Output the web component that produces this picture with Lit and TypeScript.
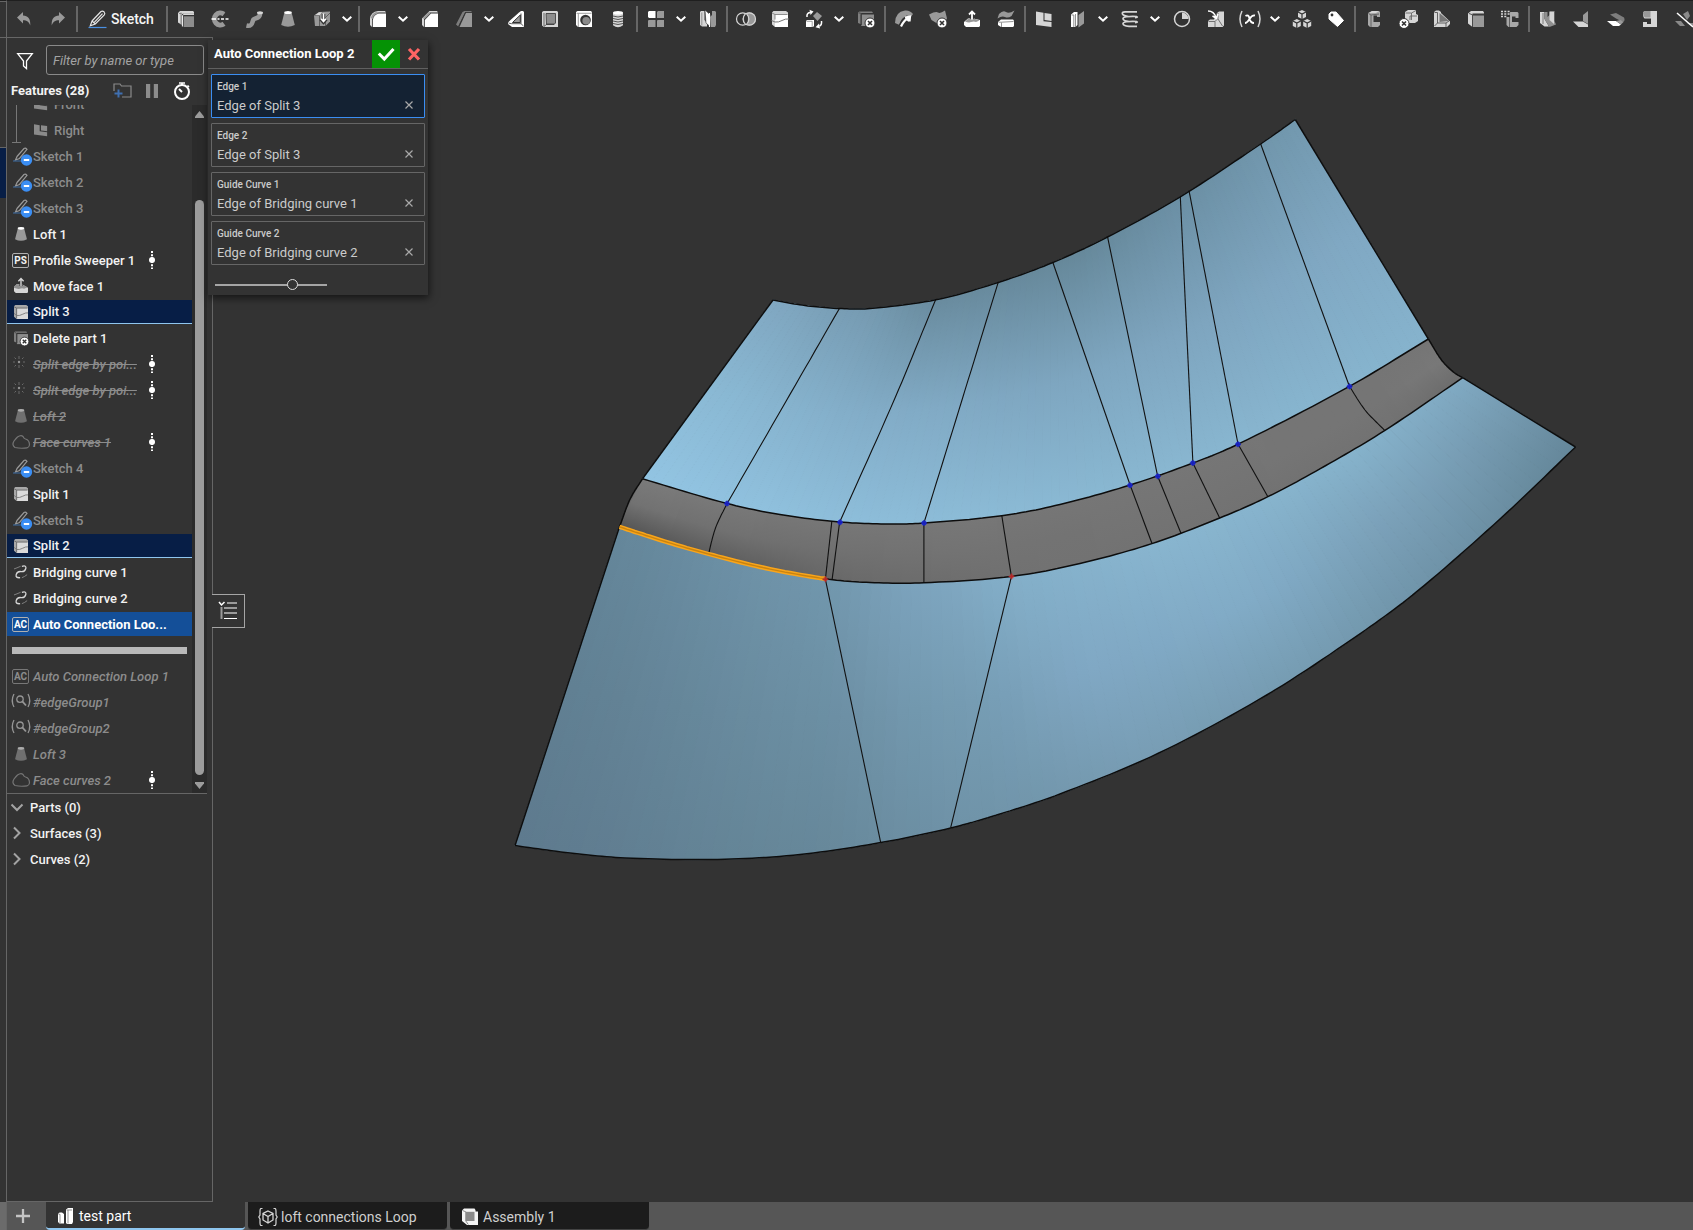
import { LitElement, html, svg, css, nothing, type SVGTemplateResult } from "lit";
import { customElement, state } from "lit/decorators.js";
import { classMap } from "lit/directives/class-map.js";

/* ---------- Icon artwork, drawn on a 16 x 16 grid ---------- */

const W = "#ffffff";
const L = "#d6d6d6";
const G = "#999999";
const D = "#333333";

const crossBadge = (cx: number, cy: number) => svg`
  <circle cx=${cx} cy=${cy} r="5" fill=${W} stroke=${D}/>
  <path d="M${cx - 2} ${cy - 2}l4 4m0-4l-4 4" stroke=${D} stroke-width="1.6"/>`;

const miniCube = (x: number, y: number) => svg`
  <g transform="translate(${x} ${y})">
    <path d="M4 0l4 2v5L4 9 0 7V2z" fill=${L}/>
    <path d="M0 2l4 2 4-2M4 4v5" fill="none" stroke=${D} stroke-width="1.2"/>
  </g>`;

const icons: Record<string, SVGTemplateResult> = {
  undo: svg`<path d="M1 6.5L7 1v3.6c5 .2 7.6 3 7.3 9.9C13 10.8 11 9.300 7 9.200V12.500z" fill=${G}/>`,
  redo: svg`<path d="M15 6.500L9 1v3.600c-5 .2-7.600 3-7.300 9.900C3 10.800 5 9.300 9 9.200V12.500z" fill=${G}/>`,
  pencil: svg`
    <path d="M3 10L12 .5Q13.500-.5 15 .8 16.500 2.300 15.300 3.800L6.300 13 1.300 14.800z M3 10l3.300 3M5 11.600l8.500-9" fill="none" stroke="#e6e6e6" stroke-width="1.200"/>
    <path d="M-.5 16.500h18" stroke="#4a90e2" stroke-width="1.200"/>`,
  extrude: svg`
    <path d="M2 0h13l1 1v1.700H4.700L3.600 4v9.800L0 11.500V2z" fill=${L}/>
    <path d="M1 2.500h2.500M3 1.500v12" stroke="#777" stroke-width=".8" fill="none"/>
    <path d="M4.400 15.500V4.800L5.800 3.300H16" stroke=${W} stroke-width="1" fill="none"/>
    <path d="M5.600 5.300H16V16H5.600z" fill="#8d8d8d"/>`,
  revolve: svg`
    <path d="M12 3.200A6 6 0 1 0 12 12.800" fill="none" stroke=${G} stroke-width="5"/>
    <path d="M13.300 1.300l1 2.200-3.500 3" stroke=${D} stroke-width=".9" fill="none"/>
    <path d="M-.5 8h4.500m1.500 0h2m1.500 0h3m1.500 0h3" stroke=${W} stroke-width="1.300"/>`,
  sweep: svg`
    <path d="M.5 14.500C7 16 6 10.500 7.500 8.500S14 8 14 3" fill="none" stroke=${G} stroke-width="4.600"/>
    <ellipse cx="14" cy="1.800" rx="3" ry="1.500" fill=${L}/>`,
  loft: svg`
    <path d="M4.300 2L1.200 14Q8 17.500 14.800 14L11.700 2z" fill=${G}/>
    <ellipse cx="8" cy="1.500" rx="3.800" ry="1.500" fill=${W}/>`,
  thicken: svg`
    <path d="M0 4.500L5 1l11-.5v10L11.500 15H1z" fill=${G}/>
    <path d="M.5 4.500h5V15M5.500 4.500L8 1.500M11.500 15V6.500L16 2" stroke="#5d5d5d" fill="none"/>
    <path d="M5 1.200h3l-2 3H1z" fill=${L}/>
    <path d="M9.500 3v7.500M6.800 8l2.700 3 2.700-3" stroke=${D} stroke-width="3.600" fill="none"/>
    <path d="M9.500 2.500v7.500M7 7.800l2.500 2.700L12 7.800" stroke=${W} stroke-width="1.600" fill="none"/>`,
  fillet: svg`
    <path d="M0 14V7.500Q1 .8 8 0h7l1 1.500H8.500Q2.700 2.500 2 8.500V16z" fill=${L}/>
    <path d="M.8 7Q2.500 1.500 7 .8L8.800 2.200Q3.500 3.500 2.600 8z" fill=${G}/>
    <path d="M2.800 16V9Q4 3.200 9 2.600h7V16z" fill=${W}/>`,
  chamfer: svg`
    <path d="M0 14V7.500L7.500 0H15l1 1.500H8L2 7.800V16z" fill=${L}/>
    <path d="M.6 7L7 .8l1.600 1.300L2.500 8.300z" fill=${G}/>
    <path d="M2.800 16V9L9 2.600h7V16z" fill=${W}/>`,
  draft: svg`
    <path d="M0 13.500L6.500 1 8.500 0H15l1 1H9.300L2.300 15.500z" fill="#7d7d7d"/>
    <path d="M3.500 16L10 1.800h6V16z" fill=${G}/>
    <path d="M2.500 15.500L9.400 1.400H16" stroke=${D} stroke-width=".7" fill="none"/>`,
  rib: svg`
    <path d="M0 11.500L2.500 9 11 1.500 13 0h2l1 1v15H4L0 13z" fill=${W}/>
    <path d="M4.500 11.500L12.300 4v7.500z" fill=${G} stroke=${D}/>
    <path d="M.5 12l3 .7h9.500L15.500 15M13 12.500V2.500" stroke=${D} fill="none" stroke-width=".8"/>`,
  shell: svg`
    <path d="M0 1l1.500-1H15l1 1v15H2l-2-1.500z" fill=${L}/>
    <path d="M4 2.500h9.500V12L12 13.500H4.500z" fill="#8d8d8d" stroke=${D} stroke-width=".8"/>
    <path d="M2 2v13M2 15.500l3-2.500h7.500" stroke=${D} fill="none" stroke-width=".7"/>`,
  hole: svg`
    <path d="M0 1l1.500-1H15l1 1.200V16H2l-2-2z" fill=${W}/>
    <path d="M.5 2.300h15M2.300 2.500V16" stroke="#777" stroke-width=".7"/>
    <circle cx="9.500" cy="9" r="5.300" fill=${D}/><circle cx="10.200" cy="9.800" r="3.800" fill="#8a8a8a"/>`,
  thread: svg`
    <path d="M3 1.800h10v12.500Q8 18 3 14.300z" fill=${L}/>
    <ellipse cx="8" cy="1.800" rx="5" ry="1.800" fill=${W}/>
    <path d="M3 5q5 2 10 0M3 7.500q5 2 10 0M3 10q5 2 10 0M3 12.500q5 2 10 0" stroke="#555" fill="none"/>`,
  pattern: svg`
    <path d="M0 1L1 0h6.500v7H1L0 6z" fill=${W}/>
    <path d="M9 1l1-1h6v7h-7zM0 9.500L1 9h6.500v7H0zM9 9.500l1-.5h6v7H9z" fill=${G}/>`,
  mirror: svg`
    <path d="M0 1l1-1h3.500v9l2.500 3v3.500H2L0 14z" fill=${L}/><path d="M1.800 1.500v13" stroke="#777" stroke-width=".7"/>
    <path d="M5-1l5.500 5v12L6 12z" fill=${W} stroke=${D} stroke-width=".6"/>
    <path d="M10 6l2-2V0h3l1 1v13l-1 2h-4z" fill=${G}/><path d="M9.500 2v14" stroke=${W}/>`,
  boolean: svg`
    <circle cx="11.300" cy="8" r="6.700" fill=${G}/>
    <circle cx="4.700" cy="8" r="6.200" fill="none" stroke=${L} stroke-width="1.200"/>
    <circle cx="11.300" cy="8" r="6.200" fill="none" stroke=${L} stroke-width="1.200"/>
    <path d="M8 3q4 5 0 10-4-5 0-10z" fill=${D}/>`,
  split: svg`
    <path d="M0 1.500L1.500 0H14l2 1.500V14l-1 2H3L0 13.500z" fill=${L}/>
    <path d="M3 3.500h13V16H3z" fill=${W}/>
    <path d="M0 2l3 1.500h12.500M3 3.500v5" stroke="#777" stroke-width=".8" fill="none"/>
    <path d="M-.5 9.500L3 11q3.500.5 7-1.500t7-1.500" stroke="#777" stroke-width="1" fill="none"/>`,
  splitMuted: svg`
    <path d="M0 1.500L1.500 0H14l2 1.500V14l-1 2H3L0 13.500z" fill="#a8a8a8"/>
    <path d="M3 3.500h13V16H3z" fill="#dadada"/>
    <path d="M0 2l3 1.500h12.500M3 3.500v12" stroke="#666" stroke-width="1" fill="none"/>
    <path d="M0 9.500L3 12q3.500.5 7-1.500t6-1.500" stroke="#777" stroke-width="1" fill="none"/>`,
  transform: svg`
    <path d="M0 10l1-1h7v6l-1 1H0z" fill=${W}/><path d="M.5 10.300h5.700V16" stroke="#777" stroke-width=".7" fill="none"/>
    <path d="M11 1l5 4-4.500 5L7 5z" fill=${G}/>
    <path d="M1 6q-.5-4 3-4.500" stroke=${W} stroke-width="1.500" fill="none"/><path d="M3.500-1.200L7.500.500 4.500 4z" fill=${W}/>
    <path d="M15.500 10q.5 4-2 5" stroke=${W} stroke-width="1.500" fill="none"/><path d="M14 17.500l-4.500-1.300L13 12.500z" fill=${W}/>`,
  deletePart: svg`
    <path d="M0 1.500L1.500.500H14l1 1.500H3.500L2.500 3.500V13L0 12z" fill="#7f7f7f"/><path d="M3.300 3.500H16V15H3.300z" fill="#8d8d8d"/>
    <path d="M.5 2h2l1 1.500V14" stroke=${D} stroke-width=".7" fill="none"/>${crossBadge(12, 12)}`,
  modifyFillet: svg`
    <path d="M-1 12Q-1 1 9-.5q5-.5 8 3.500l-3 4Q6 3 3.500 14z" fill=${G}/>
    <path d="M4.500 15Q8 8 12 6" stroke=${D} stroke-width="4" fill="none"/>
    <path d="M5 15.500Q8 9 13 6.500M9 6.500l5-1-.5 5M13 10l-2-2" stroke=${W} stroke-width="2.200" fill="none"/>`,
  deleteFace: svg`
    <path d="M-1 3.500Q6 0 8 1.500T15-.5l2 8-3 4.500-6 1L1.500 9z" fill=${G}/>${crossBadge(12, 12)}`,
  moveFace: svg`
    <path d="M0 11l4-3.500h5l7 1.500v6l-1 1H2l-2-2z" fill=${W}/>
    <path d="M1 10.500l3.500-3h5.500l5.500 2-3.500 1.500q-2-1-5 0-2 1-6-.5z" fill=${G}/>
    <path d="M8 8V2" stroke=${D} stroke-width="3.500"/><path d="M8 8.500V1.500M5 3.500L8 .5l3 3" stroke=${W} stroke-width="1.800" fill="none"/>`,
  moveFaceMuted: svg`
    <path d="M0 9l3-3h6l7 4v5l-1 1H2l-2-2z" fill=${L}/>
    <path d="M0 8.500L3 6h6l6.500 3.500-4 1.500q-2-1-5 0-2 1-6.500-1z" fill="#8f8f8f"/>
    <path d="M8 8V1" stroke=${D} stroke-width="3.500"/><path d="M8 8V0M5 2.500L8-.5l3 3" stroke=${L} stroke-width="1.600" fill="none"/>`,
  replaceFace: svg`
    <path d="M1 3Q5-1 8 1t8.500-1.500L13.500 5Q10 7.500 7 6T-.5 7.500z" fill=${G}/>
    <path d="M0 11l3-2.500h12l1 1V15l-1 1H3L0 14z" fill=${W}/><path d="M.5 11.200h3l12-.7M3.500 11.500V16" stroke="#777" stroke-width=".8" fill="none"/>`,
  plane: svg`
    <path d="M0 .5l7.500 1.200v8.500L15.500 11V16L0 14zM8.500 2l7 1v7L8.500 9z" fill=${L}/>`,
  frame: svg`
    <path d="M1 3.500L4 1h3.500v13l-2 2H1z" fill=${W}/><path d="M1.500 4h2.300v12M5.500 3v13" stroke="#777" stroke-width=".8" fill="none"/>
    <path d="M8.500 4L14 0v12.500l-5.500 4z" fill=${G}/>`,
  helix: svg`
    <path d="M15 .8H3Q-.5 1 .5 3t6 2.500H15M15 5.500Q1 5 1 7.500t6 3H15M15 5.500q1 1-2 1.200M15 10.500Q1 10 1 12.500t6 2.800h8M15 10.500q1 1-2 1.200" fill="none" stroke=${L} stroke-width="1.700"/>`,
  clock: svg`
    <circle cx="8" cy="8" r="7.500" fill="none" stroke=${L} stroke-width="1.500"/><path d="M8 8V1.500A6.500 6.500 0 0 1 14.500 8z" fill=${L}/>`,
  derive: svg`
    <path d="M0 10l2-1.500h4L9 2l2-1.500h5v14L14.500 16H0z" fill=${L}/>
    <path d="M.5 10.500h6.500V16M7 10.500l3-3V2M10 8l4.500 7" stroke="#666" stroke-width=".9" fill="none"/>
    <path d="M0 0q6 0 8 6" stroke=${D} stroke-width="3.500" fill="none"/><path d="M0 0q6 0 8 6.500M4.500 5l3.800 2.300L10 3" stroke=${W} stroke-width="1.600" fill="none"/>`,
  variable: svg`
    <path d="M0 0Q-4 8 0 16M16 0q4 8 0 16" stroke=${L} stroke-width="1.500" fill="none"/>
    <path d="M3.500 5Q6.500 3 7.500 7.500T12 12M13 4.500Q10 4 7.500 8T3 12" stroke=${W} stroke-width="1.800" fill="none"/>`,
  cubes: svg`${miniCube(4, -1)}${miniCube(-1.2, 8)}${miniCube(9.2, 8)}`,
  tag: svg`
    <path d="M1 3l2-2h5l7.500 8.500-6 6L1 8z" fill=${W} stroke=${W} stroke-width="1" stroke-linejoin="round"/><circle cx="4" cy="4" r="1.400" fill=${D}/>`,
  channel: svg`
    <path d="M2 2l4-2h7l1 1v5h-3V4.500H7.500V11H14v3l-2 2H4l-2-2z" fill="#a8a8a8"/>
    <path d="M2.500 2.500L5 4v12M5 4l8-1" stroke="#5a5a5a" stroke-width=".9" fill="none"/><path d="M6 0h7l-3 2H3z" fill=${L}/>`,
  deleteBody: svg`
    <path d="M5 1l3-2h8v4l2 1v6l-3 2H8L5 9z" fill=${L}/><path d="M5.500 2h6v7M11.500 2L16-.5M10 9V5h7" stroke="#666" stroke-width=".9" fill="none"/>${crossBadge(4, 12.5)}`,
  gusset: svg`
    <path d="M0 1l2-1.500h3L7 1v1l9 8.500V13l-3 3H0z" fill=${L}/>
    <path d="M5.500 2v9L15 10z" fill="#777"/><path d="M.5 1.500h3V12l-3 3M3.500 12H12v4M12 12l3-2" stroke="#444" stroke-width=".8" fill="none"/>`,
  solid: svg`
    <path d="M0 2.500L3 0h12l1 1.500v1H4.500V16L0 12.500z" fill=${L}/><path d="M1 2.500l3.500 1.300H16M4.500 4v12" stroke="#444" stroke-width=".9" fill="none"/>
    <path d="M5 4.500h11V16H5z" fill=${G}/>`,
  gridChannel: svg`
    <g transform="translate(2.5 0)"><path d="M2 3l4-2h7l1 1v5h-3V5.500H7.500V11H14v3l-2 2H4l-2-2z" fill="#a8a8a8"/><path d="M5 5v11" stroke="#5a5a5a" stroke-width=".9"/></g>
    <path d="M-1 0h9v6h-9z" fill=${D}/><path d="M-1 .5h2M2.300.500h2M5.600.500h2M-1 3h2M2.300 3h2M5.600 3h2M-1 5.500h2M2.300 5.500h2" stroke=${L} stroke-width="1.400"/>`,
  flange: svg`
    <path d="M0 1h4.500v7L9 15.500H4.500L0 12z" fill=${L}/><path d="M5 1h2.500v5l2-2V0h5v10L16 13.500 9.500 16 5 9z" fill="#8f8f8f"/>
    <path d="M9.500 1h4.500v12L9.500 9z" fill=${L}/><path d="M3 2v11" stroke="#666" stroke-width=".8"/>`,
  bend: svg`<path d="M9 4L14 0v13l-5-3z" fill=${G}/><path d="M-1 10.500H9l5 3V16H4.500z" fill=${L}/>`,
  hem: svg`<path d="M2 3.500l6-1.500 8 4.500q1.500 3-1 4.500L8 7.500z" fill="#7d7d7d"/><path d="M-1 10h9l5 3.500-2 1.500H5z" fill=${W}/><path d="M8 10l5 3.500 2.500-2.500-3-2z" fill=${G}/>`,
  tab: svg`<path d="M8.500 0H15v16H1V11h4v2h4V7.500H2.500Q1 5.500 1 3.500V2q.5-2 2.500-2z" fill=${L}/><path d="M1 2q.5-2 2.500-2h5v6.500H3q-2-2-2-4z" fill=${G}/>`,
  unbend: svg`<path d="M-1 10h6l4 5H4zM7 3l5-3 2 5-3 4zM11 12h6v4z" fill="#8a8a8a"/><path d="M1 2l16 14" stroke=${W} stroke-width="1.500"/>`,
  /* tree-only artwork */
  tinyPlane: svg`<path d="M0 1.500l6.500 1v7l8.500 1V15L0 13zM8 2.500l7 1v6L8 8.500z" fill="#8a8a8a"/>`,
  hiddenSketch: svg`
    <path d="M4 8.500L11 .5q1.500-.8 3 .8L6.500 10.500 2.500 12z" fill="none" stroke="#9a9a9a" stroke-width="1.200"/><path d="M0 13h9" stroke="#3d6ea8"/>
    <circle cx="13.500" cy="12" r="5.700" fill="#3b8ef3"/><path d="M10.800 12h5.400" stroke=${W} stroke-width="2"/>`,
  points: svg`<circle cx="6" cy="6" r="1.200" fill=${L}/><path d="M6 0v3M6 9v3M0 6h2M10 6h2M1.500 1.500L3 3M10.500 1.500L9 3M1.500 10.500L3 9M10.500 10.500L9 9" stroke="#8f8f8f"/>`,
  faceCurves: svg`<path d="M2 13.500Q-1.500 11 1 7q2-2.500 3.500-4Q8 .5 10 2.500q.8 2 2.500 2.500 4 1 4 6-.5 2.500-2.500 2.800-6 1-12-.3z" fill="none" stroke="#a0a0a0" stroke-width="1.200"/>`,
  bridging: svg`<path d="M0 4.500Q3 3.500 7.500 1.500M9 14.500q3-1 6-3.500" stroke="#8a8a8a" stroke-width="1" fill="none"/><path d="M9 1.500Q14.500 0 13.500 4T8 7.500 2.500 11 7 14.500" stroke=${L} stroke-width="1.500" fill="none"/>`,
  query: svg`<path d="M1 0q-3.500 6.500 0 13M15 0q3.500 6.500 0 13" fill="none" stroke=${L} stroke-width="1.300"/><circle cx="7" cy="5.200" r="3.200" fill="none" stroke=${L} stroke-width="1.300"/><path d="M9.500 7.700L13 11.500" stroke=${L} stroke-width="1.800"/>`,
  filter: svg`<path d="M.7.7h14.600L9.500 8v7.500L6.500 13V8z" fill="none" stroke=${W} stroke-width="1.300"/>`,
  folder: svg`<path d="M0 8V1h6l1.500 2H17v11H8" fill="none" stroke="#8a8a8a" stroke-width="1.200"/><path d="M.5 10.500h8M4.500 6.500v8" stroke="#3f6fb0" stroke-width="2"/>`,
  pause: svg`<path d="M2 1h4.200v14H2zM9.800 1H14v14H9.800z" fill="#8c8c8c"/>`,
  stopwatch: svg`<circle cx="8" cy="9" r="7" fill="none" stroke=${W} stroke-width="2"/><path d="M8 9L5 6" stroke=${W} stroke-width="2"/><path d="M5 0h6M8 0v2M13.500 2.500l1.500 1.500" stroke=${W} stroke-width="1.600"/>`,
  check: svg`<path d="M.8 7.500l5.500 5.500L15.500 3" fill="none" stroke=${W} stroke-width="3"/>`,
  cancel: svg`<path d="M3 3l10 10.500M13 3L3 13.500" stroke="#ff6464" stroke-width="3.200"/>`,
  clear: svg`<path d="M4.500 4.500l7 7m0-7l-7 7" stroke="#a9a9a9" stroke-width="1.200"/>`,
  plus: svg`<path d="M8 0v16M0 8h16" stroke="#c4c4c4" stroke-width="2.600"/>`,
  partStudio: svg`
    <path d="M0 6l1.500-1.500H4L6 6v9.500H1.500L0 14zM8 1.500L10 0h5v14l-1 2H9l-1-1z" fill=${W}/><path d="M.5 6.300h1.500V15M8.500 2h1.500v13.500M10 2h4" stroke="#777" stroke-width=".8" fill="none"/>`,
  featureStudio: svg`
    <path d="M2.500-.5H.8Q0 0 0 2v4l-1.200 2L0 10v4q0 2 .8 2.500h1.700M13.500-.5h1.700Q16 0 16 2v4l1.200 2L16 10v4q0 2-.8 2.500h-1.700" fill="none" stroke=${L} stroke-width="1.200"/>
    <path d="M8 2l5 2.500v6.500L8 14l-5-3V4.500zM3 4.500L8 7.500l5-3M8 7.500V14" fill="none" stroke=${L} stroke-width="1.300"/>`,
  assembly: svg`<path d="M0 1.500L2-.5h10.500l1 1.500v1.500H16V16H5L0 12z" fill="#f4f4f4"/><path d="M3.800 2.800h8.700V12H3.800z" fill="#8a8a8a"/><path d="M.5 1.500l3.300 1.300V12l2.500 3.500" stroke="#8a8a8a" fill="none"/>`,
  panel: svg`
    <path d="M0 0l2.500 3L5.500 0" stroke=${W} stroke-width="1.500" fill="none"/><path d="M2.500 5v12" stroke="#999" stroke-width="2"/>
    <path d="M8 1h10M5 6h13M5 11h13M5 16.500h13" stroke=${W} stroke-width="1.200"/>`,
};

const icon = (name: string, cls = "i16") =>
  html`<svg class=${cls} viewBox="0 0 16 16" aria-hidden="true">${icons[name]}</svg>`;

/* ---------- Surface geometry ---------- */

type Pt = [number, number];
type Rgb = [number, number, number];

function spline(points: Pt[], steps = 12): Pt[] {
  const out: Pt[] = [];
  for (let i = 0; i < points.length - 1; i++) {
    const p0 = points[Math.max(0, i - 1)];
    const p1 = points[i];
    const p2 = points[i + 1];
    const p3 = points[Math.min(points.length - 1, i + 2)];
    /* Tangents scaled by segment length keep unevenly spaced knots smooth. */
    const d = Math.hypot(p2[0] - p1[0], p2[1] - p1[1]);
    const dPrev = Math.hypot(p2[0] - p0[0], p2[1] - p0[1]) || 1;
    const dNext = Math.hypot(p3[0] - p1[0], p3[1] - p1[1]) || 1;
    for (let s = 0; s < steps; s++) {
      const t = s / steps;
      const h = [2 * t ** 3 - 3 * t ** 2 + 1, t ** 3 - 2 * t ** 2 + t, -2 * t ** 3 + 3 * t ** 2, t ** 3 - t ** 2];
      const at = (k: 0 | 1) =>
        h[0] * p1[k] + (h[1] * d * (p2[k] - p0[k])) / dPrev + h[2] * p2[k] + (h[3] * d * (p3[k] - p1[k])) / dNext;
      out.push([at(0), at(1)]);
    }
  }
  out.push(points[points.length - 1]);
  return out;
}

function resample(line: Pt[], count: number): Pt[] {
  const len = [0];
  for (let i = 1; i < line.length; i++) {
    len.push(len[i - 1] + Math.hypot(line[i][0] - line[i - 1][0], line[i][1] - line[i - 1][1]));
  }
  const out: Pt[] = [];
  let j = 0;
  for (let i = 0; i <= count; i++) {
    const target = (len[len.length - 1] * i) / count;
    while (j < line.length - 2 && len[j + 1] < target) j++;
    const t = (target - len[j]) / (len[j + 1] - len[j] || 1);
    out.push([line[j][0] + t * (line[j + 1][0] - line[j][0]), line[j][1] + t * (line[j + 1][1] - line[j][1])]);
  }
  return out;
}

const f = (n: number) => n.toFixed(1);
const toPath = (pts: Pt[]) => "M" + pts.map((p) => `${f(p[0])} ${f(p[1])}`).join("L");
const rgb = (hex: string): Rgb => [1, 3, 5].map((k) => parseInt(hex.slice(k, k + 2), 16)) as Rgb;

function ramp(stops: [number, string][], u: number): string {
  let i = 0;
  while (i < stops.length - 2 && stops[i + 1][0] < u) i++;
  const [a, ca] = stops[i];
  const [b, cb] = stops[i + 1];
  const t = Math.min(1, Math.max(0, (u - a) / (b - a)));
  const s = t * t * (3 - 2 * t) * 0.5 + t * 0.5;
  const x = rgb(ca);
  const y = rgb(cb);
  return `rgb(${x.map((v, k) => Math.round(v + (y[k] - v) * s)).join(",")})`;
}

const upperTop = spline([[773, 300], [805, 305.5], [839.3, 308.5], [870, 308.5], [935.7, 299.8], [998.2, 282.5], [1052.8, 262.5], [1107.5, 237], [1180.3, 196.8], [1260.6, 144], [1295.3, 119.5]]);
const upperBottom = spline([[642.5, 478.8], [727.1, 503.5], [780, 514.5], [839.6, 522], [889.3, 524], [923.9, 523], [1001.8, 515.7], [1060, 504.5], [1130.1, 485], [1192.9, 463], [1238, 444.2], [1349.4, 386.4], [1428.4, 339]]);
const bandBottom = spline([[619.5, 526.8], [665, 541.5], [708.6, 554], [765, 568], [825.4, 578.8], [870, 582.5], [923.9, 582.8], [1011.6, 576.4], [1080, 563.5], [1151.9, 543.6], [1219.7, 518], [1267.9, 496.7], [1325, 466], [1384.6, 430.6], [1462.7, 377.7]]);
const lowerBottom = spline([[515, 845.6], [570, 853], [625, 857.9], [717.9, 859.4], [800, 854.5], [880.7, 842.6], [950.7, 828], [1000, 814], [1060, 794], [1158.3, 753.3], [1266.7, 695], [1360.7, 633.3], [1416.7, 591.7], [1500, 519], [1575.6, 447]]);
const leftWall = spline([[642.5, 478.8], [630.4, 498.5], [619.5, 526.8]]);
const rightWall = spline([[1428.4, 339], [1441.5, 360], [1454, 372.5], [1462.7, 377.7]]);
const bandOutline = [...upperBottom, ...rightWall, ...[...bandBottom].reverse(), ...[...leftWall].reverse()];

interface Patch {
  id: string;
  a: Pt[];
  b: Pt[];
  shades: [number, [number, string][]][];
}

const patches: Patch[] = [
  {
    id: "lower", a: bandBottom, b: lowerBottom,
    shades: [
      [0, [[0, "#65879b"], [0.22, "#7095ab"], [0.35, "#7da4be"], [0.46, "#84b0ca"], [0.62, "#88b5cf"], [0.84, "#86b3cc"], [1, "#80a9c2"]]],
      [0.5, [[0, "#618093"], [0.24, "#6b8ea2"], [0.38, "#759bb2"], [0.52, "#80a8c4"], [0.68, "#81abc6"], [0.84, "#7ba1b9"], [1, "#7398ae"]]],
      [1, [[0, "#5e7a8e"], [0.24, "#668799"], [0.4, "#7094a9"], [0.55, "#789db4"], [0.7, "#769cb2"], [0.85, "#6f93a8"], [1, "#65879a"]]],
    ],
  },
  {
    id: "upper", a: upperTop, b: upperBottom,
    shades: [
      [0, [[0, "#80a7c1"], [0.15, "#779cb3"], [0.3, "#698b9e"], [0.55, "#66889a"], [0.75, "#6b8fa4"], [1, "#7298ae"]]],
      [0.5, [[0, "#8ab9d4"], [0.25, "#82acc7"], [0.5, "#7ea6c0"], [0.75, "#7ea5bf"], [1, "#80a8c3"]]],
      [1, [[0, "#92c4e2"], [0.3, "#8dbdd9"], [0.6, "#89b7d1"], [1, "#86b3cd"]]],
    ],
  },
  {
    id: "band", a: upperBottom, b: bandBottom,
    shades: [
      [0, [[0, "#7a7a7a"], [0.2, "#777777"], [1, "#757575"]]],
      [0.5, [[0, "#727272"], [0.2, "#707070"], [0.4, "#737373"], [0.9, "#757575"], [1, "#787878"]]],
      [1, [[0, "#545454"], [0.12, "#5e5e5e"], [0.3, "#6b6b6b"], [0.5, "#727272"], [0.9, "#727272"], [1, "#6c6c6c"]]],
    ],
  },
];

function drawPatch({ id, a, b, shades }: Patch) {
  const n = 90;
  const pa = resample(a, n);
  const pb = resample(b, n);
  return Array.from({ length: n }, (_, i) => {
    const u = (i + 0.5) / n;
    const g = `${id}${i}`;
    const mid = (p: Pt[], k: 0 | 1) => f((p[i][k] + p[i + 1][k]) / 2);
    return svg`
      <linearGradient id=${g} gradientUnits="userSpaceOnUse" x1=${mid(pa, 0)} y1=${mid(pa, 1)} x2=${mid(pb, 0)} y2=${mid(pb, 1)}>
        ${shades.map(([v, stops]) => svg`<stop offset=${v} stop-color=${ramp(stops, u)}/>`)}
      </linearGradient>
      <path d="${toPath([pa[i], pa[i + 1], pb[i + 1], pb[i]])}z" fill="url(#${g})" stroke="url(#${g})"/>`;
  });
}

const facetLines: Pt[][] = [
  [[839.3, 308.7], [781, 410], [727.1, 503.5]],
  [[935.7, 299.5], [895, 398], [839.6, 522.2]],
  [[998.2, 282.3], [962, 400], [923.9, 523]],
  [[1052.8, 262.3], [1130.1, 485]],
  [[1107.5, 236.7], [1157.7, 476.3]],
  [[1180.3, 196.7], [1192.9, 463]],
  [[1189, 190.7], [1238, 444]],
  [[1260.6, 143.7], [1349.4, 386.3]],
  [[825.4, 579.3], [880.7, 842.6]],
  [[1011.4, 576.6], [950.7, 827.6]],
  [[727.1, 503.5], [715.5, 528], [708.6, 553.6]],
  [[831.8, 521.5], [825.4, 579.3]],
  [[839.6, 522.2], [832.1, 579.6]],
  [[923.9, 523], [923.9, 582.7]],
  [[1001.8, 515.7], [1011.4, 576.6]],
  [[1130.1, 485], [1151.9, 543.3]],
  [[1157.7, 476.3], [1181, 533.3]],
  [[1192.9, 463], [1219.7, 518]],
  [[1238, 444], [1267.9, 496.7]],
  [[1349.4, 386.3], [1365, 410], [1384.6, 430.3]],
];

const outlines: Pt[][] = [
  upperTop, upperBottom, bandBottom, lowerBottom, leftWall, rightWall,
  [[773, 300], [642.5, 478.8]],
  [[1295.3, 119.5], [1428.4, 339]],
  [[619.5, 526.8], [515, 845.6]],
  [[1462.7, 377.7], [1575.6, 447]],
];

const bluePoints: Pt[] = [[727, 503.5], [840, 522.3], [924, 523], [1130, 485.2], [1157.8, 476.3], [1192.8, 463], [1238, 444.2], [1349.5, 386.4]];
const redPoints: Pt[] = [[825.4, 579.3], [1011.6, 576.4]];
const selectedEdge = bandBottom.slice(0, 49);

/* ---------- Data ---------- */

type Tool = [icon: string, label: string, menu?: boolean];

const toolGroups: Tool[][] = [
  [["extrude", "Extrude"], ["revolve", "Revolve"], ["sweep", "Sweep"], ["loft", "Loft"], ["thicken", "Thicken", true]],
  [["fillet", "Fillet", true], ["chamfer", "Chamfer"], ["draft", "Draft", true], ["rib", "Rib"], ["shell", "Shell"], ["hole", "Hole"], ["thread", "External thread"]],
  [["pattern", "Pattern", true], ["mirror", "Mirror"]],
  [["boolean", "Boolean"], ["split", "Split"], ["transform", "Transform", true], ["deletePart", "Delete part"]],
  [["modifyFillet", "Modify fillet"], ["deleteFace", "Delete face"], ["moveFace", "Move face"], ["replaceFace", "Replace face"]],
  [["plane", "Plane"], ["frame", "Surface", true], ["helix", "Helix", true], ["clock", "Mass properties"], ["derive", "Derived"], ["variable", "Variable", true], ["cubes", "Composite part"], ["tag", "Tag"]],
  [["channel", "Frame"], ["deleteBody", "Trim"], ["gusset", "Gusset"], ["solid", "End cap"], ["gridChannel", "Cut list"]],
  [["flange", "Sheet metal model"], ["bend", "Flange"], ["hem", "Hem"], ["tab", "Tab"], ["unbend", "Unfold"]],
];

interface Feature {
  name: string;
  icon?: string;
  badge?: string;
  tone?: "hidden" | "suppressed" | "rolled" | "picked" | "active";
  menu?: boolean;
  child?: "middle" | "last";
}

const features: Feature[] = [
  { name: "Front", icon: "tinyPlane", tone: "hidden", child: "middle" },
  { name: "Right", icon: "tinyPlane", tone: "hidden", child: "last" },
  { name: "Sketch 1", icon: "hiddenSketch", tone: "hidden" },
  { name: "Sketch 2", icon: "hiddenSketch", tone: "hidden" },
  { name: "Sketch 3", icon: "hiddenSketch", tone: "hidden" },
  { name: "Loft 1", icon: "loft" },
  { name: "Profile Sweeper 1", badge: "PS", menu: true },
  { name: "Move face 1", icon: "moveFaceMuted" },
  { name: "Split 3", icon: "splitMuted", tone: "picked" },
  { name: "Delete part 1", icon: "deletePart" },
  { name: "Split edge by poi...", icon: "points", tone: "suppressed", menu: true },
  { name: "Split edge by poi...", icon: "points", tone: "suppressed", menu: true },
  { name: "Loft 2", icon: "loft", tone: "suppressed" },
  { name: "Face curves 1", icon: "faceCurves", tone: "suppressed", menu: true },
  { name: "Sketch 4", icon: "hiddenSketch", tone: "hidden" },
  { name: "Split 1", icon: "splitMuted" },
  { name: "Sketch 5", icon: "hiddenSketch", tone: "hidden" },
  { name: "Split 2", icon: "splitMuted", tone: "picked" },
  { name: "Bridging curve 1", icon: "bridging" },
  { name: "Bridging curve 2", icon: "bridging" },
  { name: "Auto Connection Loo...", badge: "AC", tone: "active" },
];

const rolledBack: Feature[] = [
  { name: "Auto Connection Loop 1", badge: "AC", tone: "rolled" },
  { name: "#edgeGroup1", icon: "query", tone: "rolled" },
  { name: "#edgeGroup2", icon: "query", tone: "rolled" },
  { name: "Loft 3", icon: "loft", tone: "rolled" },
  { name: "Face curves 2", icon: "faceCurves", tone: "rolled", menu: true },
];

const fields = [
  ["Edge 1", "Edge of Split 3"],
  ["Edge 2", "Edge of Split 3"],
  ["Guide Curve 1", "Edge of Bridging curve 1"],
  ["Guide Curve 2", "Edge of Bridging curve 2"],
];

const base = css`
  *, *::before, *::after { box-sizing: border-box; }
  button, input { font: inherit; color: inherit; background: none; border: 0; padding: 0; margin: 0; }
  ul { list-style: none; margin: 0; padding: 0; }
  svg { display: block; overflow: visible; flex: none; }
  .i16 { width: 16px; height: 16px; }
  .i14 { width: 14px; height: 14px; }
`;

@customElement("tool-bar")
class ToolBar extends LitElement {
  static styles = [base, css`
    :host { display: flex; height: 37px; overflow: hidden; border-top: 1px solid #1f1f1f; }
    .tool { flex: none; width: 34px; display: flex; align-items: center; justify-content: center; }
    .menu { flex: none; width: 18px; padding-right: 2px; display: flex; align-items: center; justify-content: center; }
    .chevron { width: 10px; height: 6px; }
    .rule { flex: none; width: 2px; height: 26px; margin: 5px 1px; background: #666; }
    .sketch { flex: none; width: 86px; display: flex; align-items: center; gap: 6px; padding-left: 10px; font-size: 14px; font-weight: 500; color: #f5f5f5; }
  `];

  render() {
    const rule = html`<span class="rule"></span>`;
    return html`
      <button class="tool" aria-label="Undo">${icon("undo")}</button>
      <button class="tool" aria-label="Redo">${icon("redo")}</button>
      ${rule}
      <button class="sketch">${icon("pencil")}Sketch</button>
      ${toolGroups.map((group) => html`${rule}${group.map(([name, label, menu]) => html`
        <button class="tool" aria-label=${label}>${icon(name)}</button>
        ${menu ? html`<button class="menu" aria-label="${label} options">
          <svg class="chevron" viewBox="0 0 10 6"><path d="M.7.7L5 4.700 9.300.7" fill="none" stroke="#fff" stroke-width="2"/></svg>
        </button>` : nothing}`)}`)}
    `;
  }
}

@customElement("feature-panel")
class FeaturePanel extends LitElement {
  static styles = [base, css`
    :host { display: flex; flex-direction: column; width: 206px; flex: none; border: 1px solid #666; border-left: 0; font-size: 13px; }
    .filter { display: flex; align-items: center; gap: 13px; padding: 7px 8px 0 10px; }
    .filter svg { margin-top: 1px; }
    .filter input { flex: 1; min-width: 0; height: 30px; padding: 0 6px; border: 1px solid #8a8a8a; border-radius: 3px; font-style: italic; }
    .filter input::placeholder { color: #a3a3a3; opacity: 1; font-style: italic; }
    .head { display: flex; align-items: center; height: 30px; padding: 1px 22px 0 4px; }
    .head h2 { flex: 1; margin: 0; font-size: 13px; font-weight: 700; color: #f2f2f2; white-space: nowrap; }
    .actions { display: flex; align-items: center; gap: 14px; }
    .scroller { display: flex; width: 200px; overflow: hidden; border-bottom: 1px solid #666; }
    .list { flex: 1; min-width: 0; margin-top: -14px; display: flex; flex-direction: column; }
    .row { display: flex; align-items: center; height: 24px; margin: 1px 0; padding-left: 5px; color: #f2f2f2; font-weight: 500; }
    .row button { display: flex; align-items: center; text-align: left; white-space: nowrap; }
    .row .name { min-width: 112px; padding-left: 4px; }
    .glyph { width: 17px; display: flex; justify-content: center; }
    .badge { width: 17px; height: 15px; border: 1px solid #b0b0b0; border-radius: 2px; font-size: 10px; line-height: 13px; font-weight: 700; text-align: center; }
    .hidden { color: #8c8c8c; }
    .hidden.child .name { padding-left: 5px; }
    .suppressed, .rolled { color: #8c8c8c; font-style: italic; }
    .rolled .badge { font-style: normal; border-color: #777; }
    .suppressed .name { text-decoration: line-through; }
    .suppressed .glyph svg, .rolled .glyph svg { opacity: 0.6; }
    .picked { background: #071e46; border-bottom: 1px solid #8fc6ef; }
    .active { background: #144f98; color: #fff; font-weight: 700; }
    .guide { width: 20px; height: 26px; }
    .guide svg { width: 8px; height: 26px; }
    .row .dots { margin-left: 3px; width: 16px; justify-content: center; }
    .dots svg { width: 6px; height: 18px; }
    .rollback { height: 7px; margin: 10px 5px 9px; background: #b9b9b9; }
    .bar { flex: none; width: 15px; background: #2b2b2b; display: flex; flex-direction: column; align-items: center; padding: 6px 0 4px; }
    .arrow { width: 9px; height: 7px; }
    .thumb { flex: 1; width: 9px; margin: 82px 0 7px; border-radius: 5px; background: #9c9c9c; }
    .group { display: flex; align-items: center; gap: 7px; height: 26px; padding-left: 4px; color: #f2f2f2; font-weight: 500; }
    .group svg { width: 12px; height: 12px; }
  `];

  private row(item: Feature) {
    const cls = { row: true, child: !!item.child, [item.tone ?? "normal"]: true };
    const small = ["splitMuted", "loft", "deletePart", "moveFaceMuted", "tinyPlane", "bridging"].includes(item.icon ?? "");
    return html`<li class=${classMap(cls)}>
      ${item.child ? html`<span class="guide"><svg viewBox="0 0 8 26">
        <path d=${item.child === "last" ? "M4.500-1v26M0 25.500h9" : "M4.500-1v28"} stroke="#777" fill="none"/></svg></span>` : nothing}
      <button>
        ${item.badge ? html`<span class="badge">${item.badge}</span>` : html`<span class="glyph">${icon(item.icon!, small ? "i14" : "i16")}</span>`}
        <span class="name">${item.name}</span>
      </button>
      ${item.menu ? html`<button class="dots" aria-label="Feature script version">
        <svg viewBox="0 0 6 18"><path d="M3 0v18" stroke="#fff" stroke-width="2" stroke-dasharray="2 1.300"/><circle cx="3" cy="9" r="3" fill="#fff"/></svg>
      </button>` : nothing}
    </li>`;
  }

  render() {
    return html`
      <div class="filter">
        ${icon("filter")}
        <input type="text" aria-label="Filter features" placeholder="Filter by name or type">
      </div>
      <div class="head">
        <h2>Features (28)</h2>
        <div class="actions">
          <button aria-label="New folder">${icon("folder")}</button>
          <button aria-label="Pause regeneration">${icon("pause")}</button>
          <button aria-label="Regeneration times">${icon("stopwatch")}</button>
        </div>
      </div>
      <div class="scroller">
        <ul class="list">
          ${features.map((item) => this.row(item))}
          <li class="rollback"></li>
          ${rolledBack.map((item) => this.row(item))}
        </ul>
        <div class="bar">
          <svg class="arrow" viewBox="0 0 9 7"><path d="M4.500 0L9 5.500V7H0V5.500z" fill="#9c9c9c"/></svg>
          <div class="thumb"></div>
          <svg class="arrow" viewBox="0 0 9 7"><path d="M4.500 7L9 1.500V0H0v1.500z" fill="#9c9c9c"/></svg>
        </div>
      </div>
      ${[["Parts (0)", true], ["Surfaces (3)", false], ["Curves (2)", false]].map(([label, open]) => html`
        <button class="group" aria-expanded=${open ? "true" : "false"}>
          <svg viewBox="0 0 12 12"><path d=${open ? "M.5 3.500L6 9l5.500-5.500" : "M3 .5L8.500 6 3 11.500"} fill="none" stroke="#a3a3a3" stroke-width="2"/></svg>
          ${label}
        </button>`)}
    `;
  }
}

@customElement("feature-dialog")
class FeatureDialog extends LitElement {
  static styles = [base, css`
    :host { display: block; width: 220px; background: #333; box-shadow: 1px 3px 8px rgba(0, 0, 0, 0.6); font-size: 13px; }
    header { display: flex; align-items: stretch; height: 29px; border-bottom: 1px solid #606060; }
    h1 { flex: 1; margin: 0; padding-left: 6px; font-size: 13px; line-height: 28px; font-weight: 700; color: #fff; white-space: nowrap; }
    header button { width: 28px; display: flex; align-items: center; justify-content: center; }
    .accept { background: #059205; }
    .fields { display: flex; flex-direction: column; gap: 5px; padding: 5px 3px 0; }
    .field { display: grid; grid-template-columns: 1fr 16px; height: 44px; padding: 4px 7px 1px 5px; border: 1px solid #666; border-radius: 1px; align-items: center; color: #cbcbcb; }
    .field.on { background: #142233; border-color: #3b8ef3; }
    label { grid-column: 1 / 3; font-size: 10px; line-height: 14px; font-weight: 500; }
    .field input { min-width: 0; height: 20px; outline: 0; }
    .slide { display: flex; padding: 14px 7px 5px; }
    .slide input { appearance: none; width: 112px; height: 11px; background: linear-gradient(#a5a5a5, #a5a5a5) center / 100% 2px no-repeat; }
    .slide input::-webkit-slider-thumb { appearance: none; width: 11px; height: 11px; border: 1px solid #ddd; border-radius: 50%; background: #333; }
  `];

  @state() private focused = 0;

  render() {
    return html`
      <header>
        <h1>Auto Connection Loop 2</h1>
        <button class="accept" aria-label="Accept">${icon("check")}</button>
        <button aria-label="Cancel">${icon("cancel")}</button>
      </header>
      <div class="fields">
        ${fields.map(([label, value], i) => html`
          <div class=${classMap({ field: true, on: i === this.focused })} @click=${() => (this.focused = i)}>
            <label for="f${i}">${label}</label>
            <input id="f${i}" type="text" readonly .value=${value}>
            <button aria-label="Clear ${label}">${icon("clear")}</button>
          </div>`)}
      </div>
      <div class="slide"><input type="range" min="0" max="100" value="71" aria-label="Opacity"></div>
    `;
  }
}

@customElement("model-view")
class ModelView extends LitElement {
  static styles = [base, css`
    :host { display: block; flex: 1; min-width: 0; }
    .scene { width: 100%; height: 100%; overflow: hidden; }
  `];

  render() {
    const [lower, upper, band] = patches;
    return html`<svg class="scene" viewBox="213 37 1480 1165" preserveAspectRatio="xMinYMin meet" role="img" aria-label="Surface model">
      <clipPath id="bandClip"><path d="${toPath(bandOutline)}z"/></clipPath>
      ${drawPatch(lower)}${drawPatch(upper)}
      <g clip-path="url(#bandClip)">
        <path d="${toPath(bandOutline)}z" fill="#6c6c6c"/>
        ${drawPatch(band)}
      </g>
      <g fill="none" stroke="#111" stroke-width="1.100">${facetLines.map((l) => svg`<path d=${toPath(l.length > 2 ? spline(l) : l)}/>`)}</g>
      <g fill="none" stroke="#0d0d0d" stroke-width="1.500" stroke-linejoin="round">${outlines.map((l) => svg`<path d=${toPath(l)}/>`)}</g>
      <path d=${toPath(selectedEdge)} fill="none" stroke="#f9a51b" stroke-width="4.400"/>
      <path d=${toPath(selectedEdge)} fill="none" stroke="#c98410" stroke-width="1.400"/>
      ${bluePoints.map(([x, y]) => svg`<circle cx=${x} cy=${y} r="2.500" fill="#1c2bd0"/><path d="M${x - 3} ${y}h6M${x} ${y - 3}v6" stroke="#1a1fb0"/>`)}
      ${redPoints.map(([x, y]) => svg`<circle cx=${x} cy=${y} r="2.200" fill="#c0392f" opacity=".85"/><path d="M${x - 3} ${y}h6M${x} ${y - 3}v6" stroke="#b3262a"/>`)}
    </svg>`;
  }
}

@customElement("document-tabs")
class DocumentTabs extends LitElement {
  static styles = [base, css`
    :host { display: flex; gap: 3px; height: 28px; background: #565656; font-size: 14px; }
    .add { width: 36px; padding-right: 4px; display: flex; align-items: center; justify-content: center; }
    .tab { width: 199px; display: flex; align-items: center; gap: 5px; padding: 2px 12px 0; background: #1c1c1c; color: #cfcfcf; border-bottom: 1px solid #444; border-radius: 0 0 4px 4px; }
    .tab.on { background: #333; color: #fff; border-bottom: 2px solid #8fc6ef; }
  `];

  render() {
    const tabs = [["partStudio", "test part"], ["featureStudio", "loft connections Loop"], ["assembly", "Assembly 1"]];
    return html`
      <button class="add" aria-label="Insert new element">${icon("plus", "i14")}</button>
      ${tabs.map(([glyph, label], i) => html`<button class=${classMap({ tab: true, on: i === 0 })}>${icon(glyph)}${label}</button>`)}
    `;
  }
}

@customElement("app-root")
class AppRoot extends LitElement {
  static styles = [base, css`
    :host { display: flex; height: 100vh; background: #333; color: #f2f2f2; font-family: Roboto, "Liberation Sans", sans-serif; overflow: hidden; }
    .edge { flex: none; width: 7px; display: flex; flex-direction: column; border-top: 1px solid #1f1f1f; border-right: 1px solid #666; }
    .edge .cell { border-top: 1px solid #666; }
    .edge .first { height: 36px; }
    .edge .second { height: 110px; }
    .edge .mark { height: 51px; background: #071e46; }
    .edge .foot { height: 28px; margin-top: auto; background: #6b6b6b; }
    .app { flex: 1; min-width: 0; display: flex; flex-direction: column; }
    .body { flex: 1; min-height: 0; display: flex; position: relative; }
    feature-dialog { position: absolute; left: 201px; top: 3px; }
    .toggle { position: absolute; left: 205px; top: 557px; width: 33px; height: 34px; display: flex; align-items: center; justify-content: center; background: #333; border: 1px solid #a5a5a5; border-left: 0; }
    .toggle svg { width: 18px; height: 18px; }
  `];

  render() {
    return html`
      <div class="edge">
        <div class="cell first"></div>
        <div class="cell second"></div>
        <div class="cell mark"></div>
        <div class="foot"></div>
      </div>
      <div class="app">
        <tool-bar></tool-bar>
        <div class="body">
          <feature-panel></feature-panel>
          <model-view></model-view>
          <button class="toggle" aria-label="Toggle feature list">
            <svg viewBox="0 0 18 18">${icons.panel}</svg>
          </button>
          <feature-dialog></feature-dialog>
        </div>
        <document-tabs></document-tabs>
      </div>
    `;
  }
}
